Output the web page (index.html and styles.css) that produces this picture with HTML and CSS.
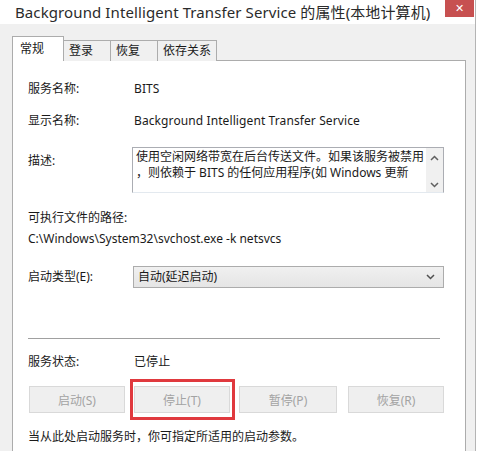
FILE: index.html
```html
<!DOCTYPE html>
<html lang="zh-CN">
<head>
<meta charset="utf-8">
<title>BITS 属性</title>
<link rel="stylesheet" href="styles.css">
</head>
<body>
<div class="window">
  <div class="titlebar">
    <span class="title">Background Intelligent Transfer Service 的属性(本地计算机)</span>
    <span class="spacer"></span>
    <span class="xbtn">✕</span>
  </div>
  <div class="client">
    <div class="tabs">
      <div class="tab active">常规</div>
      <div class="tab t2">登录</div>
      <div class="tab t3">恢复</div>
      <div class="tab t4">依存关系</div>
    </div>
    <div class="panel">
      <div class="row r1"><span class="label">服务名称:</span><span class="value">BITS</span></div>
      <div class="row r2"><span class="label">显示名称:</span><span class="value">Background Intelligent Transfer Service</span></div>
      <div class="row r3">
        <span class="label desc-label">描述:</span>
        <div class="textarea">
          <div class="ta-text">使用空闲网络带宽在后台传送文件。如果该服务被禁用<br>，则依赖于 BITS 的任何应用程序(如 Windows 更新</div>
          <div class="ta-scroll">
            <svg width="9" height="6" viewBox="0 0 9 6"><path d="M1 5 L4.5 1.5 L8 5" fill="none" stroke="#606060" stroke-width="1.5"/></svg>
            <svg width="9" height="6" viewBox="0 0 9 6"><path d="M1 1 L4.5 4.5 L8 1" fill="none" stroke="#606060" stroke-width="1.5"/></svg>
          </div>
        </div>
      </div>
      <div class="path-label">可执行文件的路径:</div>
      <div class="path-value">C:\Windows\System32\svchost.exe -k netsvcs</div>
      <div class="row r4">
        <span class="label">启动类型(E):</span>
        <div class="select">
          <span>自动(延迟启动)</span>
          <svg width="9" height="6" viewBox="0 0 9 6"><path d="M1 1 L4.5 4.5 L8 1" fill="none" stroke="#505050" stroke-width="1.5"/></svg>
        </div>
      </div>
      <div class="sep"></div>
      <div class="row r5"><span class="label">服务状态:</span><span class="value">已停止</span></div>
      <div class="buttons">
        <div class="btn b1">启动(S)</div>
        <div class="btn b2 marked">停止(T)</div>
        <div class="btn b3">暂停(P)</div>
        <div class="btn b4">恢复(R)</div>
      </div>
      <div class="note">当从此处启动服务时，你可指定所适用的启动参数。</div>
    </div>
  </div>
</div>
</body>
</html>
```
FILE: styles.css
```css
html, body {
  margin: 0;
  padding: 0;
  background: #ffffff;
  overflow: hidden;
}
body {
  width: 484px;
  height: 451px;
  font-family: "Noto Sans", "Noto Sans CJK SC", sans-serif;
  font-size: 12px;
  color: #1a1a1a;
}
.window {
  width: 475px;
  height: 451px;
  border-right: 1px solid #b4b4b4;
  background: #f0f0f0;
  display: flex;
  flex-direction: column;
}
.titlebar {
  height: 24px;
  background-color: #ffffff;
  background-image: linear-gradient(to left, #ffffff 0 1px, #c75050 1px 30px, #ffffff 30px 100%);
  background-size: 100% 17px;
  background-repeat: no-repeat;
  display: flex;
  align-items: flex-start;
}
.title {
  flex: none;
  margin-left: 15px;
  margin-top: 1px;
  font-size: 15px;
  letter-spacing: 0.1px;
  line-height: 22px;
  color: #2b2b2b;
  white-space: nowrap;
}
.spacer {
  flex: 1;
}
.xbtn {
  flex: none;
  display: block;
  margin-right: 1px;
  width: 29px;
  height: 17px;
  background-color: #c75050;
  color: #ffffff;
  font-family: "DejaVu Sans", sans-serif;
  font-size: 11px;
  font-weight: bold;
  line-height: 17px;
  text-align: center;
}
.client {
  flex: 1;
  padding: 12px 9px 0 12px;
  border-left: 3px solid #f7f7f7;
  margin-left: -3px;
  display: flex;
  flex-direction: column;
}
.tabs {
  display: flex;
  align-items: flex-end;
  height: 25px;
  position: relative;
  z-index: 2;
  margin-bottom: -1px;
}
.tab {
  box-sizing: border-box;
  height: 21px;
  border: 1px solid #acacac;
  border-bottom: none;
  background: #f0f0f0;
  padding-left: 5px;
  line-height: 19px;
  margin-left: -1px;
}
.tab.active {
  height: 25px;
  width: 52px;
  background: #ffffff;
  padding-left: 7px;
  line-height: 23px;
  margin-left: 0;
}
.t2 { width: 48px; }
.t3 { width: 48px; }
.t4 { width: 60px; }
.panel {
  flex: 1;
  background: #ffffff;
  border: 1px solid #acacac;
  border-bottom: none;
  padding: 20px 0 0 15px;
  display: flex;
  flex-direction: column;
}
.row {
  display: flex;
  align-items: center;
  line-height: 16px;
}
.label {
  width: 106px;
  flex: none;
}
.value {
  letter-spacing: 0.1px;
}
.r2 { margin-top: 16px; }
.r3 { margin-top: 18px; align-items: flex-start; }
.desc-label { padding-top: 6px; }
.textarea {
  margin-left: -2px;
  box-sizing: border-box;
  width: 312px;
  height: 46px;
  border: 1px solid #abadb3;
  border-bottom-color: #e3e9ef;
  display: flex;
}
.ta-text {
  flex: 1;
  padding: 1px 0 0 3px;
  line-height: 16px;
  white-space: nowrap;
  overflow: hidden;
}
.ta-scroll {
  width: 17px;
  background: #f0f0f0;
  display: flex;
  flex-direction: column;
  justify-content: space-between;
  align-items: center;
  padding: 7px 0 4px;
}
.path-label { margin-top: 17px; line-height: 16px; }
.path-value { margin-top: 5px; line-height: 16px; }
.r4 { margin-top: 19px; }
.select {
  margin-left: -1px;
  box-sizing: border-box;
  width: 311px;
  height: 22px;
  border: 1px solid #acacac;
  background: linear-gradient(#f0f0f0, #e5e5e5);
  display: flex;
  align-items: center;
  justify-content: space-between;
  padding: 0 8px 0 4px;
}
.sep {
  margin-top: 50px;
  width: 412px;
  height: 1px;
  background: #a0a0a0;
}
.r5 { margin-top: 15px; }
.buttons {
  margin-top: 16px;
  display: flex;
  padding-left: 1px;
}
.btn {
  box-sizing: border-box;
  height: 27px;
  width: 96px;
  border: 1px solid #d9d9d9;
  background: #efefef;
  color: #a3a3a3;
  display: flex;
  align-items: center;
  justify-content: center;
  position: relative;
}
.b2 { margin-left: 9px; }
.b3 { margin-left: 9px; width: 98px; }
.b4 { margin-left: 11px; }
.marked::after {
  content: "";
  position: absolute;
  left: -5px;
  right: -6px;
  top: -8px;
  bottom: -8px;
  border: 3px solid #e0393e;
}
.note {
  margin-top: 16px;
  line-height: 16px;
}
```
